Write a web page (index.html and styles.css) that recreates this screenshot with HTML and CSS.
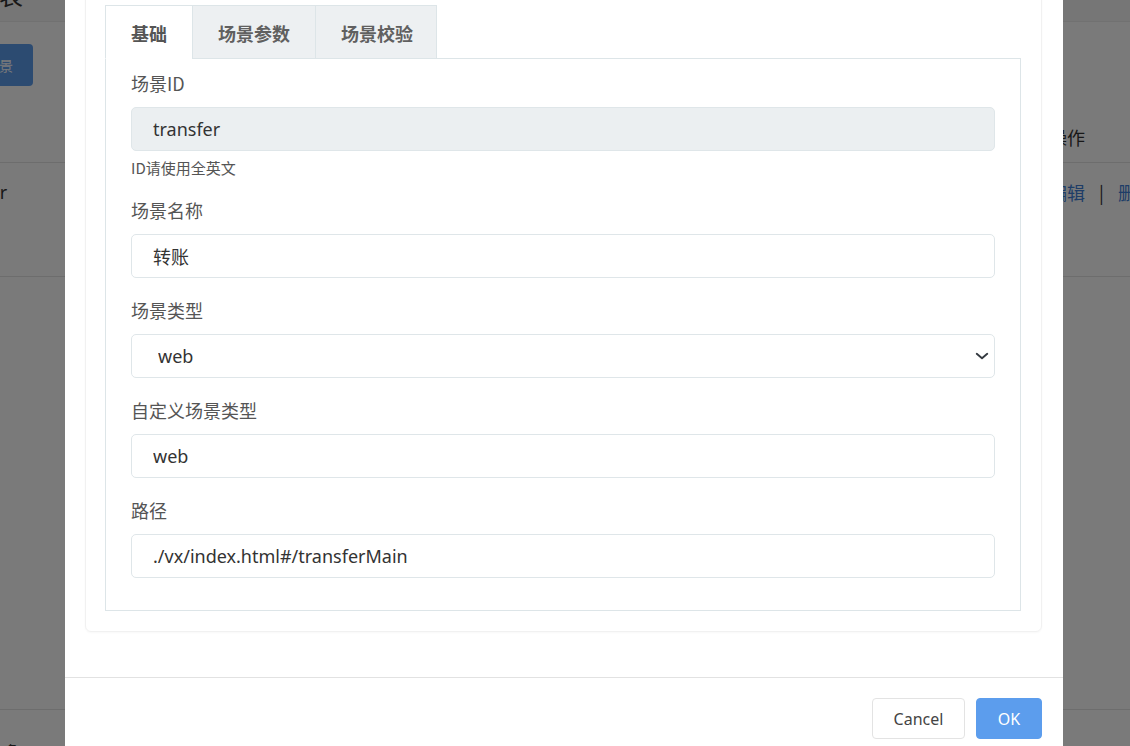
FILE: index.html
```html
<!DOCTYPE html>
<html lang="zh-CN">
<head>
<meta charset="utf-8">
<title>场景列表</title>
<link rel="stylesheet" href="styles.css">
</head>
<body>
  <div class="page">
    <div class="page-header"><h1 class="page-title">场景列表</h1></div>
    <div class="toolbar"><button class="btn-add">新增场景</button></div>
    <div class="table">
      <div class="table-row table-head">
        <div class="cell cell-id">场景ID</div>
        <div class="cell cell-ops">操作</div>
      </div>
      <div class="table-row table-body-row">
        <div class="cell cell-id">transfer</div>
        <div class="cell cell-ops"><a class="link">编辑</a><span class="sep">|</span><a class="link">删除</a></div>
      </div>
      <div class="table-empty"></div>
    </div>
    <div class="pager">共 1 条</div>
  </div>

  <div class="mask"></div>

  <div class="modal">
    <div class="modal-body">
      <div class="card">
        <ul class="tabs">
          <li class="tab tab-active">基础</li>
          <li class="tab">场景参数</li>
          <li class="tab">场景校验</li>
        </ul>
        <div class="tab-panel">
          <div class="form-group">
            <label class="form-label">场景ID</label>
            <input class="form-input" type="text" value="transfer" disabled>
            <div class="form-hint">ID请使用全英文</div>
          </div>
          <div class="form-group">
            <label class="form-label">场景名称</label>
            <input class="form-input" type="text" value="转账">
          </div>
          <div class="form-group">
            <label class="form-label">场景类型</label>
            <select class="form-input form-select">
              <option>web</option>
              <option>app</option>
            </select>
          </div>
          <div class="form-group">
            <label class="form-label">自定义场景类型</label>
            <input class="form-input" type="text" value="web">
          </div>
          <div class="form-group">
            <label class="form-label">路径</label>
            <input class="form-input" type="text" value="./vx/index.html#/transferMain">
          </div>
        </div>
      </div>
    </div>
    <div class="modal-footer">
      <button class="btn btn-cancel">Cancel</button>
      <button class="btn btn-ok">OK</button>
    </div>
  </div>
</body>
</html>
```

FILE: styles.css
```css
* { box-sizing: border-box; }

html, body {
  margin: 0;
  padding: 0;
}

body {
  width: 1130px;
  height: 746px;
  overflow: hidden;
  position: relative;
  background: #ffffff;
  font-family: "Noto Sans", "Noto Sans CJK SC", sans-serif;
  color: #333;
}

/* ---------- background page ---------- */
.page {
  width: 1300px;
  margin-left: -73px;
  margin-top: -30px;
}

.page-header {
  height: 52px;
  background: #f6f6f6;
  border-bottom: 1px solid #ececec;
  display: flex;
  align-items: flex-end;
}

.page-title {
  margin: 0 0 10px 0;
  font-size: 24px;
  font-weight: normal;
  line-height: 30px;
  color: #333;
}

.toolbar {
  padding: 22px 0 0 10px;
}

.btn-add {
  height: 42px;
  padding: 0 20px;
  border: none;
  border-radius: 4px;
  background: #5c9ded;
  color: #fff;
  font-size: 14px;
  font-family: inherit;
}

.table {
  margin-top: 24px;
}

.table-row {
  display: flex;
  border-bottom: 1px solid #e4e4e4;
}

.table-head {
  height: 53px;
  align-items: center;
  border-top: 1px solid transparent;
}

.table-body-row {
  height: 114px;
  align-items: flex-start;
  padding-top: 16px;
}

.cell {
  font-family: "Noto Sans CJK SC", sans-serif;
  font-size: 18px;
  line-height: 26px;
  color: #333;
}

.cell-id {
  width: 1080px;
  padding-left: 13px;
  font-family: "Noto Sans", "Noto Sans CJK SC", sans-serif;
}

.cell-ops {
  display: flex;
  gap: 14px;
  padding-left: 42px;
}

.link {
  color: #3f7fd8;
}

.sep {
  color: #333;
}

.table-empty {
  height: 433px;
  border-bottom: 1px solid #e4e4e4;
}

.pager {
  padding: 30px 0 0 50px;
  font-family: "Noto Sans CJK SC", sans-serif;
  font-size: 14px;
  line-height: 20px;
}

.mask {
  position: absolute;
  inset: 0;
  background: rgba(0, 0, 0, 0.52);
}

/* ---------- modal ---------- */
.modal {
  position: absolute;
  left: 65px;
  top: -35px;
  width: 998px;
  background: #ffffff;
}

.modal-body {
  padding: 20px 21px 45px 20px;
}

.card {
  border: 1px solid #f1f1f1;
  border-radius: 6px;
  padding: 19px 20px 20px 19px;
  box-shadow: 0 1px 2px rgba(0, 0, 0, 0.03);
}

.tabs {
  list-style: none;
  margin: 0 0 -1px 0;
  padding: 0;
  display: flex;
  position: relative;
}

.tab {
  height: 54px;
  padding: 0 25px;
  border: 1px solid #dde5e8;
  background: #edf0f2;
  font-family: "Noto Sans CJK SC", sans-serif;
  font-size: 18px;
  font-weight: bold;
  line-height: 54px;
  color: #606060;
  margin-left: -1px;
}

.tab:first-child {
  margin-left: 0;
}

.tab:last-child {
  padding-right: 23px;
}

.tab-active {
  background: #ffffff;
  border-bottom-color: #ffffff;
  color: #555;
}

.tab-panel {
  border: 1px solid #dde5e8;
  padding: 12px 25px 12px 25px;
}

.form-group {
  margin-bottom: 20px;
}

.form-label {
  display: block;
  font-family: "Noto Sans CJK SC", sans-serif;
  font-size: 18px;
  line-height: 24px;
  color: #555;
  margin-bottom: 12px;
}

.form-input {
  display: block;
  width: 100%;
  height: 44px;
  padding: 0 21px;
  border: 1px solid #dfe6e9;
  border-radius: 5px;
  background: #ffffff;
  font-family: "Noto Sans", "Noto Sans CJK SC", sans-serif;
  font-size: 18px;
  color: #333;
  outline: none;
}

.form-input:disabled {
  background: #ebeff1;
  color: #333;
}

.form-select {
  appearance: none;
  -webkit-appearance: none;
  padding-left: 26px;
  background-image: url("data:image/svg+xml,%3csvg xmlns='http://www.w3.org/2000/svg' viewBox='0 0 16 16'%3e%3cpath fill='none' stroke='%23343a40' stroke-linecap='round' stroke-linejoin='round' stroke-width='2.2' d='M2 5.5l6 5 6-5'/%3e%3c/svg%3e");
  background-repeat: no-repeat;
  background-position: right 5px center;
  background-size: 14px 14px;
}

.form-hint {
  margin-top: 7px;
  font-family: "Noto Sans CJK SC", sans-serif;
  font-size: 15px;
  line-height: 20px;
  color: #555;
  margin-bottom: 1px;
}

.modal-footer {
  border-top: 1px solid #e2e2e2;
  padding: 20px 21px 20px 20px;
  display: flex;
  justify-content: flex-end;
  gap: 11px;
}

.btn {
  height: 41px;
  border-radius: 4px;
  font-family: "Noto Sans", sans-serif;
  font-size: 16px;
  cursor: pointer;
}

.btn-cancel {
  width: 93px;
  background: #ffffff;
  border: 1px solid #e3e3e3;
  color: #444;
}

.btn-ok {
  width: 66px;
  background: #5c9ded;
  border: 1px solid #5c9ded;
  color: #ffffff;
}
```
